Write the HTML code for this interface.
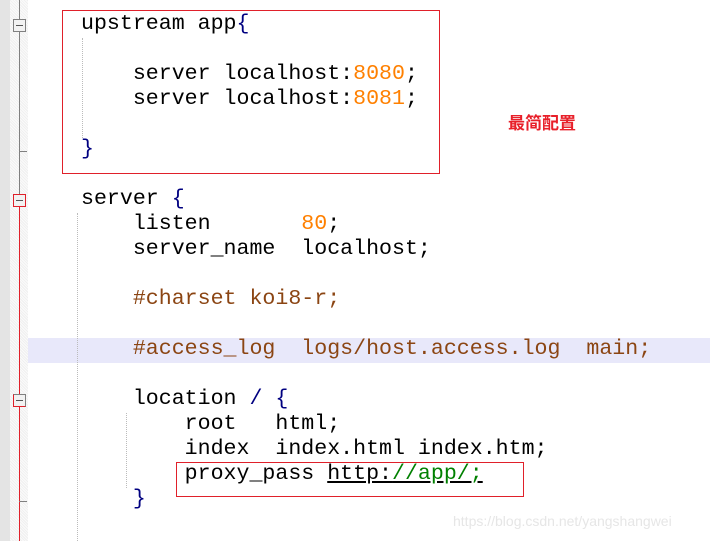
<!DOCTYPE html><html><head><meta charset="utf-8"><style>
body{margin:0;width:710px;height:541px;background:#fff;position:relative;overflow:hidden;font-family:"Liberation Mono",monospace;}
.g1{position:absolute;left:0;top:0;width:10px;height:541px;background:#e4e4e4}
.g2{position:absolute;left:10px;top:0;width:18px;height:541px;background:repeating-linear-gradient(45deg,#f0f0f0 0 1px,#fafafa 1px 2px)}
.fl{position:absolute;left:19px;width:1px}
.box{position:absolute;width:11px;height:11px;left:13px;background:#f2f2f2;border:1px solid #808080}
.box:after{content:"";position:absolute;left:2px;right:2px;top:5px;height:1px;background:#555}
.l{position:absolute;left:81px;font-size:21.6px;line-height:25px;height:25px;white-space:pre;color:#000}
.b{color:#000080}.n{color:#ff8000}.c{color:#8b4513}.gr{color:#008000}
.rb{position:absolute;border:1px solid #e0202a}
.vd{position:absolute;width:0;border-left:1px dotted #bbb}
</style></head><body>
<div class="g1"></div><div class="g2"></div>
<div class="fl" style="top:0;height:200px;background:#808080"></div>
<div style="position:absolute;left:19px;top:151px;width:8px;height:1px;background:#808080"></div>
<div class="fl" style="top:200px;height:341px;background:#e0202a"></div>
<div style="position:absolute;left:19px;top:501px;width:8px;height:1px;background:#808080"></div>
<div class="box" style="top:19px"></div>
<div class="box" style="top:194px;border-color:#e0202a"></div>
<div class="box" style="top:394px;border-left-color:#e0202a;border-bottom-color:#e0202a"></div>
<div style="position:absolute;left:28px;top:338px;width:682px;height:25px;background:#e8e8fa"></div>
<div class="vd" style="left:82px;top:38px;height:100px"></div>
<div class="vd" style="left:77px;top:213px;height:328px"></div>
<div class="vd" style="left:126px;top:413px;height:75px"></div>
<div class="l" style="top:12px">upstream app<span class="b">{</span></div>
<div class="l" style="top:62px">    server localhost:<span class="n">8080</span>;</div>
<div class="l" style="top:87px">    server localhost:<span class="n">8081</span>;</div>
<div class="l" style="top:137px"><span class="b">}</span></div>
<div class="l" style="top:187px">server <span class="b">{</span></div>
<div class="l" style="top:212px">    listen       <span class="n">80</span>;</div>
<div class="l" style="top:237px">    server_name  localhost;</div>
<div class="l c" style="top:287px">    #charset koi8-r;</div>
<div class="l c" style="top:337px">    #access_log  logs/host.access.log  main;</div>
<div class="l" style="top:387px">    location <span class="b">/ {</span></div>
<div class="l" style="top:412px">        root   html;</div>
<div class="l" style="top:437px">        index  index.html index.htm;</div>
<div class="l" style="top:462px">        proxy_pass <u>http:<span class="gr">//app/;</span></u></div>
<div class="l" style="top:487px">    <span class="b">}</span></div>
<div class="rb" style="left:62px;top:10px;width:376px;height:162px"></div>
<div class="rb" style="left:176px;top:462px;width:346px;height:33px"></div>
<div style="position:absolute;left:508px;top:111px;font:bold 17px 'Noto Sans CJK SC',sans-serif;color:#e8202a;line-height:22px">最简配置</div>
<div style="position:absolute;left:453px;top:513px;font:14px 'Liberation Sans',sans-serif;color:#e6e6e6">https://blog.csdn.net/yangshangwei</div>
</body></html>
